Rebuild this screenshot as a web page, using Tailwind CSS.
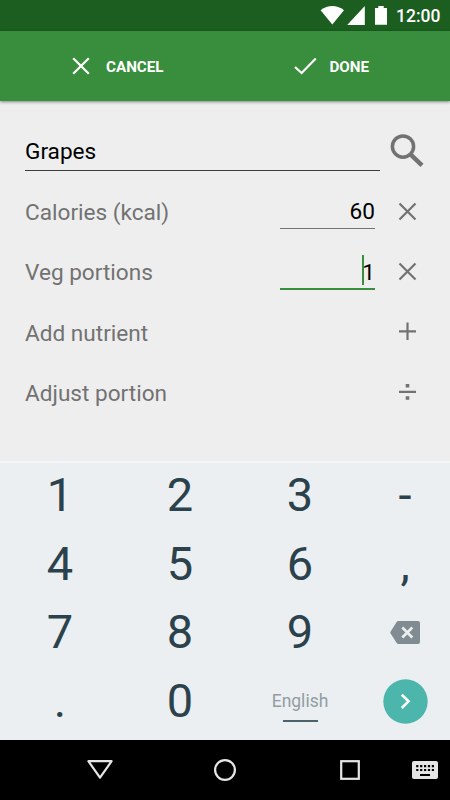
<!DOCTYPE html>
<html lang="en">
<head>
    <meta charset="UTF-8">
    <meta name="viewport" content="width=device-width, initial-scale=1.0">
    <title>Edit food</title>
    <script src="https://cdn.jsdelivr.net/npm/@tailwindcss/browser@4"></script>
</head>
<body class="w-[450px] h-[800px] overflow-hidden flex flex-col bg-[#eeeeee] font-[Roboto,sans-serif]">
    <!-- Status bar -->
    <div class="h-[31px] shrink-0 bg-[#1b5e20] flex items-center text-white">
        <svg class="w-[130px] h-[31px] ml-[270px] shrink-0" viewBox="270 0 130 31" fill="#fff">
            <path d="M320.600 10.200Q332.300 1.800 344 10.200L332.300 24.600Z"/>
            <path d="M364.800 6V24.900H347.200Z"/>
            <path d="M375 8H378.300V6H383.700V8H387V24.700H375Z"/>
        </svg>
        <span class="-ml-[4px] text-[17.5px] font-medium leading-none mt-[3px]">12:00</span>
    </div>

    <!-- Action bar -->
    <div class="relative h-[70px] shrink-0 bg-[#388e3c] flex items-center text-white text-[15.2px] font-bold shadow-[0_1px_3px_rgba(0,0,0,0.45)]">
        <button class="w-[225px] h-full flex items-center pl-[72px]">
            <svg class="w-[18px] h-[18px] mr-[16px]" viewBox="0 0 18 18" fill="none" stroke="#fff" stroke-width="2.200"><path d="M1.200 1.200L16.800 16.800M16.800 1.200L1.200 16.800"/></svg>
            <span class="pt-[2px]">CANCEL</span>
        </button>
        <button class="w-[225px] h-full flex items-center pl-[69px]">
            <svg class="w-[23px] h-[18px] mr-[12.5px]" viewBox="0 0 23 18" fill="none" stroke="#fff" stroke-width="2.200"><path d="M1 10L7.600 16L21.800 1.500"/></svg>
            <span class="pt-[2px]">DONE</span>
        </button>
    </div>

    <!-- Form -->
    <div class="h-[360px] shrink-0 pt-[21px] pl-[25px] text-[22.6px] leading-[22.5px] text-[#727272]">
        <div class="h-[60px] flex">
            <div class="w-[355px] h-[49px] pt-[13px] border-b border-[#3c3c3c] flex items-center text-black">Grapes</div>
            <svg class="w-[54px] h-[60px]" viewBox="380 122 54 60" fill="none" stroke="#727272"><circle cx="403" cy="146.600" r="10.600" stroke-width="3.500"/><path d="M411 154.800L422 165.300" stroke-width="4.400"/></svg>
        </div>
        <div class="h-[60px] flex">
            <div class="w-[255px] pt-[2px] flex items-center">Calories (kcal)</div>
            <div class="w-[95px] h-[47px] pt-[15px] border-b border-[#727272] flex items-center justify-end text-black">60</div>
            <svg class="w-[64px] h-[60px]" viewBox="375 182 64 60" fill="none" stroke="#727272" stroke-width="2.200"><path d="M399.500 203.500L415.500 219.500M415.500 203.500L399.500 219.500"/></svg>
        </div>
        <div class="h-[60px] flex">
            <div class="w-[255px] pt-[2px] flex items-center">Veg portions</div>
            <div class="relative w-[95px] h-[48px] pt-[16px] border-b-2 border-[#388e3c] flex items-center justify-end text-black">
                1
                <span class="absolute right-[11px] top-[13px] w-[2px] h-[30px] bg-[#388e3c]"></span>
            </div>
            <svg class="w-[64px] h-[60px]" viewBox="375 242 64 60" fill="none" stroke="#727272" stroke-width="2.200"><path d="M399.500 263.500L415.500 279.500M415.500 263.500L399.500 279.500"/></svg>
        </div>
        <div class="h-[61px] flex">
            <div class="w-[350px] pt-[3px] flex items-center">Add nutrient</div>
            <svg class="w-[64px] h-[61px]" viewBox="375 302 64 61" fill="none" stroke="#727272" stroke-width="2.200"><path d="M399 331.300H416M407.500 322.500V340"/></svg>
        </div>
        <div class="h-[60px] flex">
            <div class="w-[350px] pt-[2px] flex items-center">Adjust portion</div>
            <svg class="w-[64px] h-[60px]" viewBox="375 363 64 60" fill="#727272"><path d="M399 390.700H416V393H399ZM405.700 384H409.300V387.500H405.700ZM405.700 396.200H409.300V399.800H405.700Z"/></svg>
        </div>
    </div>

    <!-- Keypad -->
    <div class="h-[279px] shrink-0 bg-[#ebeff2] shadow-[inset_0_2px_0_#f5f6f7] grid grid-cols-[120px_120px_120px_90px] grid-rows-[repeat(4,68.75px)] place-items-center text-[47px] leading-none text-[#2b424c] [&>span]:-mt-[2px]">
        <span>1</span>
        <span>2</span>
        <span>3</span>
        <span>-</span>
        <span>4</span>
        <span>5</span>
        <span>6</span>
        <span>,</span>
        <span>7</span>
        <span>8</span>
        <span>9</span>
        <svg class="w-[30px] h-[23px] -mt-[1px]" viewBox="0 0 30 23"><path d="M8.500 0H28Q30 0 30 2V21Q30 23 28 23H8.500Q7.300 23 6.500 21.800L0.500 12.300Q0 11.500 0.500 10.700L6.500 1.200Q7.300 0 8.500 0Z" fill="#808c91"/><path d="M12.300 6.500L22.300 16.500M22.300 6.500L12.300 16.500" stroke="#ebeff2" stroke-width="2.600"/></svg>
        <span>.</span>
        <span>0</span>
        <div class="flex flex-col items-center text-[17.5px] text-[#929da2] pt-[12px]">
            <span>English</span>
            <span class="w-[35px] h-[2px] mt-[9px] bg-[#4c626d]"></span>
        </div>
        <svg class="w-[45px] h-[45px] -mt-[1px]" viewBox="0 0 45 45" fill="none"><circle cx="22.500" cy="22.500" r="22.200" fill="#4db6ac"/><path d="M18.800 15.700L25.500 22.300L18.800 29" stroke="#fff" stroke-width="2.600"/></svg>
    </div>

    <!-- Navigation bar -->
    <div class="h-[60px] shrink-0 bg-black">
        <svg class="w-[450px] h-[60px]" viewBox="0 740 450 60" fill="none" stroke="#e6e6e6" stroke-width="2.200">
            <path d="M88.400 761.200H111.600L100 777.700Z" stroke-linejoin="round"/>
            <circle cx="225" cy="770" r="9.900"/>
            <rect x="341.200" y="761.200" width="17.600" height="17.600"/>
            <rect x="412" y="761" width="26" height="18" rx="2" fill="#e6e6e6" stroke="none"/>
            <path d="M416.200 766.200H434M416.200 770H434" stroke="#000" stroke-width="2.200" stroke-dasharray="2.200 1.700"/>
            <path d="M420 775H430" stroke="#000" stroke-width="2"/>
        </svg>
    </div>
</body>
</html>
